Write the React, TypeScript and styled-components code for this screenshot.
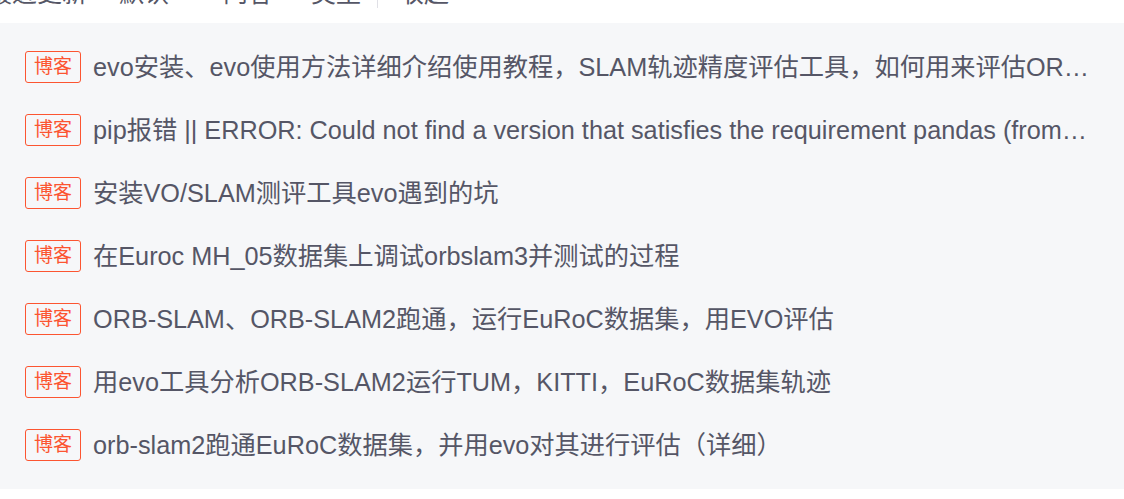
import React from "react";
import styled, { createGlobalStyle } from "styled-components";

const Global = createGlobalStyle`
  html, body { margin: 0; padding: 0; background: #ffffff; }
  body { font-family: "Liberation Sans", "Noto Sans CJK SC", sans-serif; }
`;

const Page = styled.div`
  width: 1124px;
  height: 499px;
  overflow: hidden;
  background: #ffffff;
`;

const Header = styled.div`
  height: 23px;
  overflow: hidden;
  background: #ffffff;
`;

const Tabs = styled.div`
  display: flex;
  align-items: center;
  margin-top: -22px;
  height: 30px;
  font-size: 25px;
  line-height: 30px;
  color: #555666;
  white-space: nowrap;
`;

const Tab = styled.span<{ $left: number }>`
  margin-left: ${(p) => p.$left}px;
`;

const Divider = styled.span<{ $left: number }>`
  margin-left: ${(p) => p.$left}px;
  width: 1px;
  height: 30px;
  background: #e0e0e6;
`;

const Panel = styled.div`
  background: #f6f7f9;
  padding: 12px 30px 13px 25px;
  display: flex;
  flex-direction: column;
`;

const Row = styled.div`
  height: 63px;
  display: flex;
  align-items: center;
  min-width: 0;
`;

const Tag = styled.span`
  flex: none;
  box-sizing: border-box;
  width: 56px;
  height: 32px;
  border: 1px solid #fc5531;
  border-radius: 3px;
  color: #fc5531;
  font-size: 19px;
  line-height: 30px;
  text-align: center;
`;

const Title = styled.span`
  flex: 1;
  min-width: 0;
  margin-left: 12px;
  font-size: 25.25px;
  line-height: 32px;
  color: #555666;
  white-space: nowrap;
  overflow: hidden;
  text-overflow: ellipsis;
`;

const items = [
  "evo安装、evo使用方法详细介绍使用教程，SLAM轨迹精度评估工具，如何用来评估ORB-SLAM2生成的轨迹精度，评估激光雷达SLAM与视觉SLAM的轨迹精度",
  "pip报错 || ERROR: Could not find a version that satisfies the requirement pandas (from versions: none)",
  "安装VO/SLAM测评工具evo遇到的坑",
  "在Euroc MH_05数据集上调试orbslam3并测试的过程",
  "ORB-SLAM、ORB-SLAM2跑通，运行EuRoC数据集，用EVO评估",
  "用evo工具分析ORB-SLAM2运行TUM，KITTI，EuRoC数据集轨迹",
  "orb-slam2跑通EuRoC数据集，并用evo对其进行评估（详细）",
];

export default function App() {
  return (
    <Page>
      <Global />
      <Header>
        <Tabs>
          <Tab $left={-13}>最近更新</Tab>
          <Tab $left={32}>默认</Tab>
          <Tab $left={54}>内容</Tab>
          <Tab $left={38}>类型</Tab>
          <Divider $left={16} />
          <Tab $left={21}>收起</Tab>
        </Tabs>
      </Header>
      <Panel>
        {items.map((t) => (
          <Row key={t}>
            <Tag>博客</Tag>
            <Title>{t}</Title>
          </Row>
        ))}
      </Panel>
    </Page>
  );
}
